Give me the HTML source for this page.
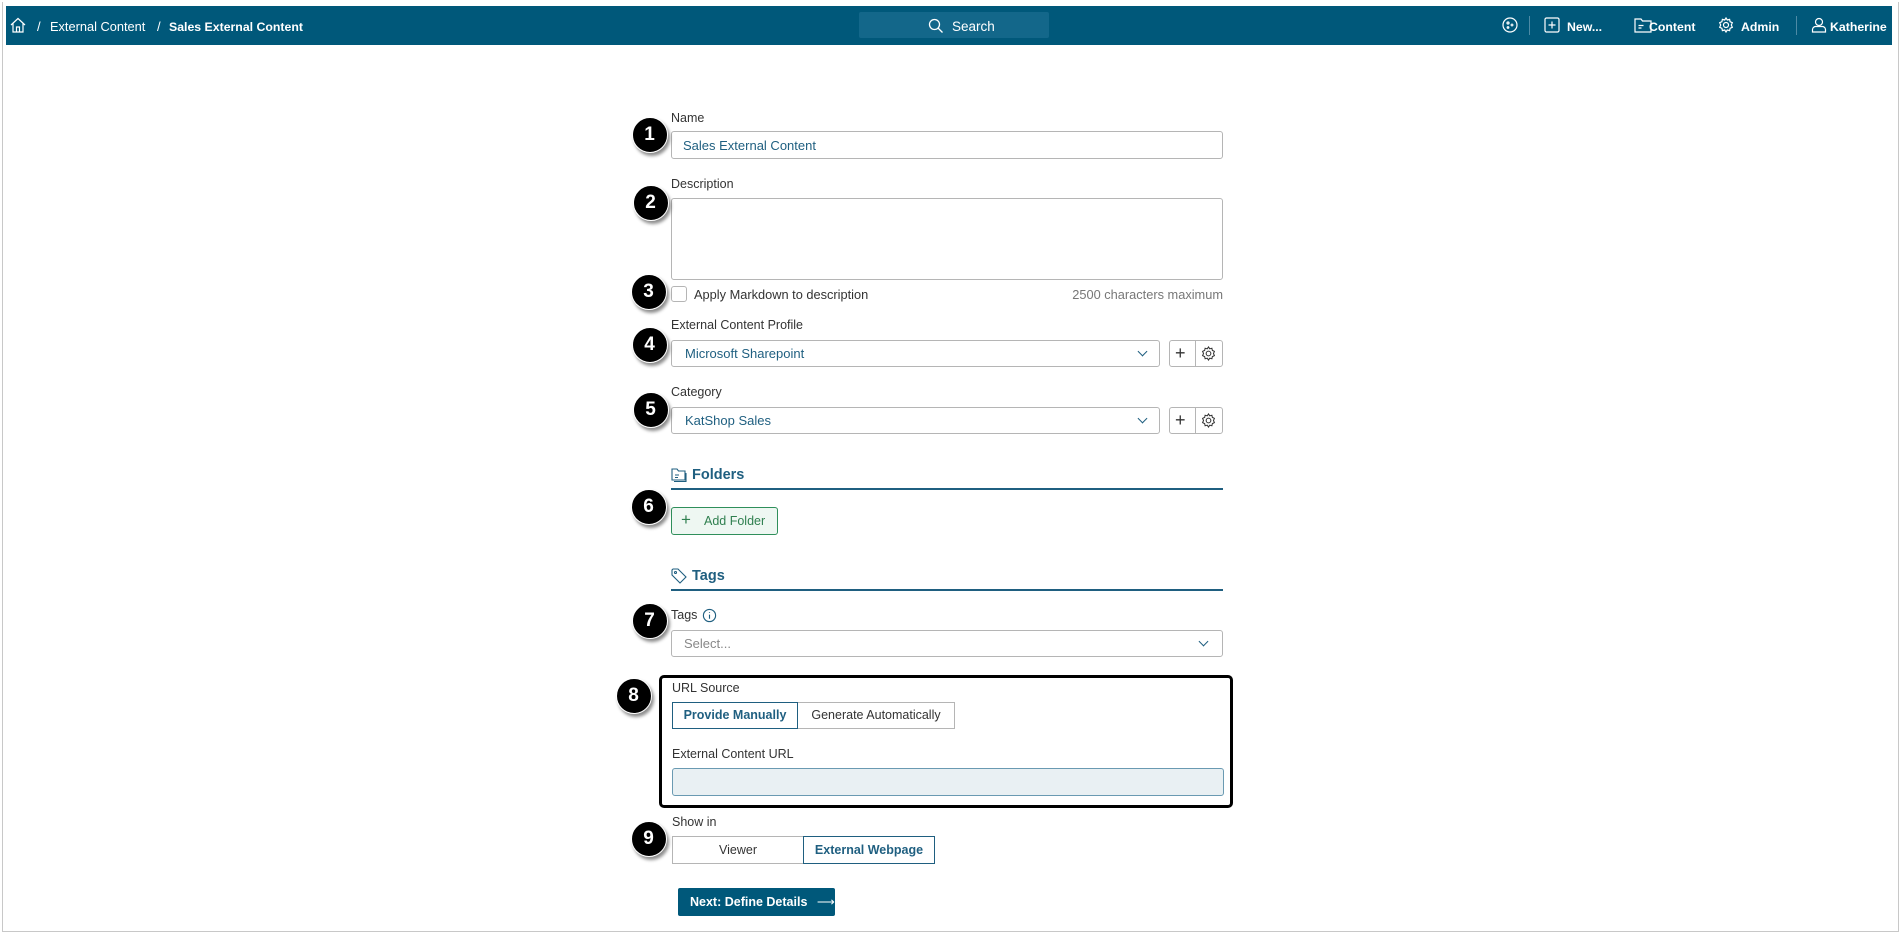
<!DOCTYPE html>
<html><head><meta charset="utf-8"><style>
*{box-sizing:border-box;margin:0;padding:0}
body{width:1903px;height:934px;background:#fff;font-family:"Liberation Sans",sans-serif;position:relative;overflow:hidden;color:#222}
.frame{position:absolute;left:2px;top:2px;width:1897px;height:930px;border:1px solid #c8c8c8;border-top:none}
.hdr{position:absolute;left:6px;top:6px;width:1886px;height:39px;background:#00587a;color:#fff;font-size:13px}
.abs{position:absolute}
.w{color:#fff;font-size:13px;top:13px;position:absolute}
.b{font-weight:bold;font-size:12.3px;top:14px}
.lab{position:absolute;font-size:12.5px;color:#333}
.inp{position:absolute;border:1px solid #b5b5b5;border-radius:3px;background:#fff}
.val{position:absolute;font-size:13px;color:#1f5f80}
.badge{position:absolute;width:36px;height:36px;border-radius:50%;background:#000;color:#fff;font-weight:bold;font-size:19px;text-align:center;line-height:33px;box-shadow:2px 3px 3px rgba(0,0,0,.45);border:1.5px solid #fff;margin:-1.5px 0 0 -1.5px}
.chev{position:absolute;width:7px;height:7px;border-right:1.4px solid #1f5f80;border-bottom:1.4px solid #1f5f80;transform:rotate(45deg)}
.h2{position:absolute;font-size:14.5px;font-weight:bold;color:#1f5f80}
.line{position:absolute;height:1.5px;background:#1f5f80}
.btn{position:absolute;font-size:12.5px;text-align:center;border:1px solid #b5b5b5;background:#fff;color:#333}
</style></head><body>
<div class="frame"></div>
<div class="hdr">
 <svg class="abs" style="left:4px;top:11px" width="16" height="16" viewBox="0 0 16 16" fill="none" stroke="#fff" stroke-width="1.2"><path d="M1 8 L8 1.5 L15 8 M3 6.5 V15 H13 V6.5 M6.5 15 V10 H9.5 V15"/></svg>
 <span class="w" style="left:31px">/</span>
 <span class="w" style="left:44px;font-size:12.8px">External Content</span>
 <span class="w" style="left:151px">/</span>
 <span class="w b" style="left:163px">Sales External Content</span>
 <div class="abs" style="left:853px;top:6px;width:190px;height:26px;background:#13678a;border-radius:2px"></div>
 <svg class="abs" style="left:922px;top:12px" width="16" height="16" viewBox="0 0 16 16" fill="none" stroke="#fff" stroke-width="1.3"><circle cx="6.5" cy="6.5" r="5"/><path d="M10 10 L14.5 14.5"/></svg>
 <span class="w" style="left:946px;font-size:13.5px">Search</span>
 <svg class="abs" style="left:1496px;top:11px" width="16" height="16" viewBox="0 0 16 16" fill="none" stroke="#fff" stroke-width="1.2"><circle cx="8" cy="8" r="7"/><circle cx="6" cy="6" r="1"/><path d="M10 6.5v3M8.5 8h3"/><circle cx="6" cy="10.5" r=".8"/></svg>
 <div class="abs" style="left:1523px;top:10px;width:1px;height:19px;background:#4d8aa5"></div>
 <svg class="abs" style="left:1538px;top:11px" width="16" height="16" viewBox="0 0 16 16" fill="none" stroke="#fff" stroke-width="1.2"><rect x="1" y="1" width="14" height="14" rx="1.5"/><path d="M8 4.5v7M4.5 8h7"/></svg>
 <span class="w b" style="left:1561px">New...</span>
 <svg class="abs" style="left:1628px;top:11px" width="18" height="16" viewBox="0 0 18 16" fill="none" stroke="#fff" stroke-width="1.2"><path d="M1 2h6l1.5 2H17v11H1z M4.5 8.5h5M4.5 11h3"/></svg>
 <span class="w b" style="left:1643px">Content</span>
 <svg class="abs" style="left:1712px;top:11px" width="16" height="16" viewBox="0 0 16 16" fill="none" stroke="#fff" stroke-width="1.2"><circle cx="8" cy="8" r="2.5"/><path d="M8 1l1.3 2 2.3-.6.5 2.3 2.2 1L13.3 8l1 2.3-2.2 1-.5 2.3-2.3-.6L8 15l-1.3-2-2.3.6-.5-2.3-2.2-1L2.7 8l-1-2.3 2.2-1 .5-2.3 2.3.6z"/></svg>
 <span class="w b" style="left:1735px">Admin</span>
 <div class="abs" style="left:1790px;top:10px;width:1px;height:19px;background:#4d8aa5"></div>
 <svg class="abs" style="left:1805px;top:11px" width="16" height="16" viewBox="0 0 16 16" fill="none" stroke="#fff" stroke-width="1.2"><circle cx="8" cy="5" r="3.5"/><path d="M1.5 15v-2.5c0-1.5 1.5-3 3-3h7c1.5 0 3 1.5 3 3V15z"/></svg>
 <span class="w b" style="left:1824px">Katherine</span>
</div>

<div class="lab" style="left:671px;top:111px">Name</div>
<div class="inp" style="left:671px;top:131px;width:552px;height:28px"></div>
<div class="val" style="left:683px;top:138px">Sales External Content</div>
<div class="badge" style="left:633px;top:118px">1</div>

<div class="lab" style="left:671px;top:177px">Description</div>
<div class="inp" style="left:671px;top:198px;width:552px;height:82px"></div>
<div class="badge" style="left:634px;top:186px">2</div>

<div class="inp" style="left:671px;top:286px;width:16px;height:16px"></div>
<div class="lab" style="left:694px;top:287px;font-size:12.8px">Apply Markdown to description</div>
<div class="lab" style="left:1060px;top:287px;width:163px;text-align:right;color:#777;font-size:12.8px">2500 characters maximum</div>
<div class="badge" style="left:632px;top:275px">3</div>

<div class="lab" style="left:671px;top:318px">External Content Profile</div>
<div class="inp" style="left:671px;top:340px;width:489px;height:27px"></div>
<div class="val" style="left:685px;top:346px">Microsoft Sharepoint</div>
<div class="chev" style="left:1139px;top:348px"></div>
<div class="inp" style="left:1169px;top:340px;width:54px;height:27px"></div>
<div class="abs" style="left:1195px;top:340px;width:1px;height:27px;background:#b5b5b5"></div>
<div class="abs" style="left:1175px;top:340px;font-size:18px;line-height:26px;color:#333">+</div>
<svg class="abs" style="left:1201px;top:346px" width="15" height="15" viewBox="0 0 16 16" fill="none" stroke="#333" stroke-width="1.1"><circle cx="8" cy="8" r="2.5"/><path d="M8 1l1.3 2 2.3-.6.5 2.3 2.2 1L13.3 8l1 2.3-2.2 1-.5 2.3-2.3-.6L8 15l-1.3-2-2.3.6-.5-2.3-2.2-1L2.7 8l-1-2.3 2.2-1 .5-2.3 2.3.6z"/></svg>
<div class="badge" style="left:633px;top:328px">4</div>

<div class="lab" style="left:671px;top:385px">Category</div>
<div class="inp" style="left:671px;top:407px;width:489px;height:27px"></div>
<div class="val" style="left:685px;top:413px">KatShop Sales</div>
<div class="chev" style="left:1139px;top:415px"></div>
<div class="inp" style="left:1169px;top:407px;width:54px;height:27px"></div>
<div class="abs" style="left:1195px;top:407px;width:1px;height:27px;background:#b5b5b5"></div>
<div class="abs" style="left:1175px;top:407px;font-size:18px;line-height:26px;color:#333">+</div>
<svg class="abs" style="left:1201px;top:413px" width="15" height="15" viewBox="0 0 16 16" fill="none" stroke="#333" stroke-width="1.1"><circle cx="8" cy="8" r="2.5"/><path d="M8 1l1.3 2 2.3-.6.5 2.3 2.2 1L13.3 8l1 2.3-2.2 1-.5 2.3-2.3-.6L8 15l-1.3-2-2.3.6-.5-2.3-2.2-1L2.7 8l-1-2.3 2.2-1 .5-2.3 2.3.6z"/></svg>
<div class="badge" style="left:634px;top:393px">5</div>

<svg class="abs" style="left:671px;top:468px" width="16" height="14" viewBox="0 0 16 14" fill="none" stroke="#1f5f80" stroke-width="1.1"><path d="M1 1h5l1.5 2H14v9H1z M4 7h4M4 9.5h3 M15 5v8.5H3"/></svg>
<div class="h2" style="left:692px;top:467px">Folders</div>
<div class="line" style="left:671px;top:488px;width:552px"></div>
<div class="abs" style="left:671px;top:507px;width:107px;height:28px;border:1px solid #2f8f5b;border-radius:3px;background:#eef7f2"></div>
<div class="abs" style="left:681px;top:510px;font-size:17px;color:#2f7f4f">+</div>
<div class="abs" style="left:704px;top:514px;font-size:12.5px;color:#2f7f4f">Add Folder</div>
<div class="badge" style="left:632px;top:490px">6</div>

<svg class="abs" style="left:671px;top:568px" width="16" height="16" viewBox="0 0 16 16" fill="none" stroke="#1f5f80" stroke-width="1.1"><path d="M1 2v5l8 8 6-6-8-8H2z"/><circle cx="4.5" cy="4.5" r="1"/></svg>
<div class="h2" style="left:692px;top:568px">Tags</div>
<div class="line" style="left:671px;top:589px;width:552px"></div>

<div class="lab" style="left:671px;top:608px">Tags</div>
<svg class="abs" style="left:702px;top:608px" width="15" height="15" viewBox="0 0 16 16" fill="none" stroke="#1f5f80" stroke-width="1.2"><circle cx="8" cy="8" r="6.5"/><path d="M8 7v4.5M8 4.5v.8"/></svg>
<div class="inp" style="left:671px;top:630px;width:552px;height:27px"></div>
<div class="val" style="left:684px;top:636px;color:#888">Select...</div>
<div class="chev" style="left:1200px;top:638px"></div>
<div class="badge" style="left:633px;top:604px">7</div>

<div class="abs" style="left:659px;top:675px;width:574px;height:133px;border:3px solid #000;border-radius:5px"></div>
<div class="lab" style="left:672px;top:681px">URL Source</div>
<div class="btn" style="left:672px;top:702px;width:126px;height:27px;line-height:25px;border-color:#1f5f80;color:#1f5f80;font-weight:bold;z-index:2">Provide Manually</div>
<div class="btn" style="left:797px;top:702px;width:158px;height:27px;line-height:25px">Generate Automatically</div>
<div class="lab" style="left:672px;top:747px">External Content URL</div>
<div class="abs" style="left:672px;top:768px;width:552px;height:28px;background:#e9f0f3;border:1px solid #6a9ab2;border-radius:3px"></div>
<div class="badge" style="left:617px;top:679px">8</div>

<div class="lab" style="left:672px;top:815px">Show in</div>
<div class="btn" style="left:672px;top:836px;width:132px;height:28px;line-height:26px">Viewer</div>
<div class="btn" style="left:803px;top:836px;width:132px;height:28px;line-height:26px;border-color:#1f5f80;color:#1f5f80;font-weight:bold">External Webpage</div>
<div class="badge" style="left:632px;top:822px">9</div>

<div class="abs" style="left:678px;top:888px;width:157px;height:28px;background:#00587a;border-radius:2px;color:#fff;font-size:12.5px;font-weight:bold;line-height:28px;padding-left:12px">Next: Define Details <span style="font-weight:normal;margin-left:6px">⟶</span></div>
</body></html>
